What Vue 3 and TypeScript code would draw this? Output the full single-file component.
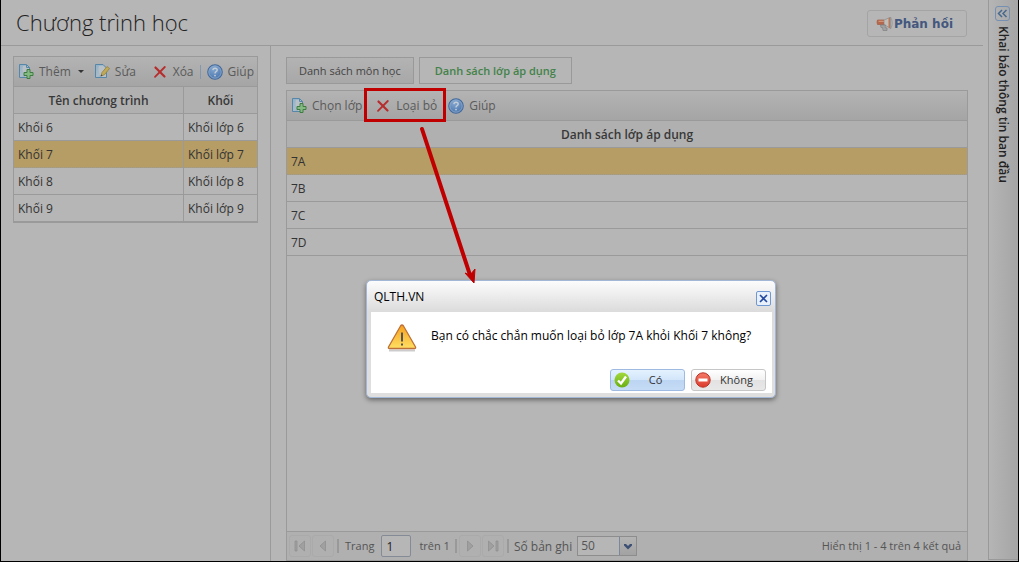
<script setup lang="ts">
import { ref } from 'vue'

interface Program {
  name: string
  grade: string
}

const programs: Program[] = [
  { name: 'Khối 6', grade: 'Khối lớp 6' },
  { name: 'Khối 7', grade: 'Khối lớp 7' },
  { name: 'Khối 8', grade: 'Khối lớp 8' },
  { name: 'Khối 9', grade: 'Khối lớp 9' },
]
const classes: string[] = ['7A', '7B', '7C', '7D']

const selectedProgram = ref(1)
const selectedClass = ref(0)
const page = ref('1')
const pageSize = ref('50')
const confirmOpen = ref(true)
</script>

<template>
  <svg class="defs" width="0" height="0" aria-hidden="true">
    <defs>
      <linearGradient id="g-doc" x1="0" y1="0" x2="1" y2="1">
        <stop offset="0" stop-color="#8fb0c8" />
        <stop offset="0.55" stop-color="#a9bcc9" />
        <stop offset="1" stop-color="#7c9fbd" />
      </linearGradient>
      <radialGradient id="g-help" cx="0.4" cy="0.25" r="0.8">
        <stop offset="0" stop-color="#86a9d0" />
        <stop offset="1" stop-color="#4672ac" />
      </radialGradient>
      <linearGradient id="g-warn" x1="0" y1="0" x2="0" y2="1">
        <stop offset="0" stop-color="#f6a01c" />
        <stop offset="1" stop-color="#ffe063" />
      </linearGradient>
      <linearGradient id="g-yes" x1="0" y1="0" x2="0" y2="1">
        <stop offset="0" stop-color="#a3d93c" />
        <stop offset="1" stop-color="#68ae12" />
      </linearGradient>
      <linearGradient id="g-no" x1="0" y1="0" x2="0" y2="1">
        <stop offset="0" stop-color="#f47a68" />
        <stop offset="1" stop-color="#dc3a2c" />
      </linearGradient>
      <symbol id="i-add" viewBox="0 0 16 16">
        <path d="M1.500 .5H8.500L11.500 3.500V13.500H1.500Z" fill="url(#g-doc)" stroke="#5686a8" />
        <path d="M5 2H8.500L11 4.500V13H7Q3.500 7 5 2Z" fill="#b9c1c6" />
        <path d="M8.500 1V3.500H11.500" fill="none" stroke="#5686a8" />
        <path d="M9 5.500H12V8.500H15V11.500H12V14.500H9V11.500H6V8.500H9Z" fill="#85b983" stroke="#3f7c42" />
      </symbol>
      <symbol id="i-edit" viewBox="0 0 16 16">
        <path d="M1.500 .5H9L12.500 4V13.500H1.500Z" fill="url(#g-doc)" stroke="#5686a8" />
        <path d="M5 2H9L12 4.500V13H7Q3.500 7 5 2Z" fill="#b9c1c6" />
        <path d="M7 12L8 8.500L13 2.500L15.500 4.500L10.500 10.700Z" fill="#c0aa57" stroke="#93803f" stroke-width=".8" />
        <path d="M6.500 12.500L7.300 10.500L8.600 11.600Z" fill="#444" />
      </symbol>
      <symbol id="i-cross" viewBox="0 0 16 16">
        <path d="M3.500 3.500L12.500 12.500" stroke="#b72d2e" stroke-width="2.200" stroke-linecap="round" />
        <path d="M12.800 3L3 12.800" stroke="#b72d2e" stroke-width="1.800" stroke-linecap="round" />
      </symbol>
      <symbol id="i-help" viewBox="0 0 16 16">
        <circle cx="8" cy="8" r="7.200" fill="url(#g-help)" stroke="#42699d" stroke-width="1.200" />
        <circle cx="8" cy="8" r="6.200" fill="none" stroke="#9ab2cd" stroke-width=".7" />
        <path d="M5.800 6.100Q6 4.200 8 4.200Q10.200 4.200 10.200 6.100Q10.200 7.100 9.100 7.700Q8 8.300 8 9.500" fill="none" stroke="#c5cdd6" stroke-width="1.400" />
        <circle cx="8" cy="11.600" r=".9" fill="#c5cdd6" />
      </symbol>
    </defs>
  </svg>

  <div class="page">
    <div class="main">
      <header class="header">
        <h1>Chương trình học</h1>
        <button type="button" class="feedback">
          <svg width="18" height="16" viewBox="0 0 18 16" aria-hidden="true">
            <path d="M1.500 4H8V8.500H1.500Q.5 6 1.500 4Z" fill="#b8684a" stroke="#a35c40" stroke-width=".7" />
            <path d="M2.500 4.700H8V6H2.500Z" fill="#cf9478" />
            <path d="M8 4L14 1.500V12L8 8.500Z" fill="#c2bdb7" stroke="#8b8b8b" stroke-width=".7" />
            <path d="M12.500 2.200L14.500 1V13L12.500 11.200Z" fill="#b8785c" />
            <path d="M14.500 1Q18 7 14.500 13Z" fill="#b4b4b4" stroke="#909090" stroke-width=".7" />
            <path d="M4.500 9H9.500L9 11.500L11 12V14.500H7L6.500 11.500H5Z" fill="#a2a2a2" stroke="#808080" stroke-width=".7" />
          </svg>
          Phản hồi
        </button>
      </header>

      <div class="columns">
        <section class="left">
          <div class="panel">
            <div class="toolbar">
              <button type="button" class="tool">
                <svg width="16" height="16"><use href="#i-add" /></svg>Thêm<i class="caret"></i>
              </button>
              <button type="button" class="tool"><svg width="16" height="16"><use href="#i-edit" /></svg>Sửa</button>
              <button type="button" class="tool push"><svg width="16" height="16"><use href="#i-cross" /></svg>Xóa</button>
              <span class="split"></span>
              <button type="button" class="tool"><svg width="16" height="16"><use href="#i-help" /></svg>Giúp</button>
            </div>
            <table class="grid">
              <thead>
                <tr><th>Tên chương trình</th><th class="grade">Khối</th></tr>
              </thead>
              <tbody>
                <tr v-for="(p, i) in programs" :key="p.name" :class="{ selected: i === selectedProgram }" @click="selectedProgram = i">
                  <td>{{ p.name }}</td>
                  <td>{{ p.grade }}</td>
                </tr>
              </tbody>
            </table>
          </div>
        </section>

        <section class="right">
          <nav class="tabs">
            <button type="button" class="tab first">Danh sách môn học</button>
            <button type="button" class="tab active">Danh sách lớp áp dụng</button>
          </nav>
          <div class="panel fill">
            <div class="toolbar">
              <button type="button" class="tool"><svg width="16" height="16"><use href="#i-add" /></svg>Chọn lớp</button>
              <button type="button" class="tool marked" @click="confirmOpen = true">
                <svg width="16" height="16"><use href="#i-cross" /></svg>Loại bỏ
              </button>
              <button type="button" class="tool"><svg width="16" height="16"><use href="#i-help" /></svg>Giúp</button>
            </div>
            <table class="grid">
              <thead>
                <tr><th>Danh sách lớp áp dụng</th></tr>
              </thead>
              <tbody>
                <tr v-for="(c, i) in classes" :key="c" :class="{ selected: i === selectedClass }" @click="selectedClass = i">
                  <td>{{ c }}</td>
                </tr>
              </tbody>
            </table>
            <footer class="pager">
              <button type="button" class="nav" aria-label="Trang đầu">
                <svg width="12" height="12"><path d="M1 1H3V11H1ZM10.500 1V11L5 6Z" fill="#a0a0a0" stroke="#8d8d8d" stroke-width=".7" /></svg>
              </button>
              <button type="button" class="nav" aria-label="Trang trước">
                <svg width="12" height="12"><path d="M8.500 1V11L3 6Z" fill="#a0a0a0" stroke="#8d8d8d" stroke-width=".7" /></svg>
              </button>
              <span class="bar"></span>
              <label for="page" class="page-label">Trang</label>
              <input id="page" v-model="page" type="text" class="page-input" />
              <span class="total">trên 1</span>
              <span class="bar"></span>
              <button type="button" class="nav" aria-label="Trang sau">
                <svg width="12" height="12"><path d="M3.500 1V11L9 6Z" fill="#a0a0a0" stroke="#8d8d8d" stroke-width=".7" /></svg>
              </button>
              <button type="button" class="nav" aria-label="Trang cuối">
                <svg width="12" height="12"><path d="M1.500 1V11L7 6ZM9 1H11V11H9Z" fill="#a0a0a0" stroke="#8d8d8d" stroke-width=".7" /></svg>
              </button>
              <span class="bar"></span>
              <label for="size" class="size-label">Số bản ghi</label>
              <span class="select-wrap">
                <select id="size" v-model="pageSize">
                  <option>20</option>
                  <option>50</option>
                  <option>100</option>
                </select>
                <span class="trigger">
                  <svg width="10" height="7"><path d="M1 1H3L5 3L7 1H9V2.500L5 6.500L1 2.500Z" fill="#3c4f75" /></svg>
                </span>
              </span>
              <span class="summary">Hiển thị 1 - 4 trên 4 kết quả</span>
            </footer>
          </div>
        </section>
      </div>
    </div>

    <aside class="side">
      <button type="button" class="expand" aria-label="Mở rộng">
        <svg width="13" height="13">
          <path d="M6 3L2.500 6.500L6 10M10.500 3L7 6.500L10.500 10" fill="none" stroke="#46688f" stroke-width="1.500" />
        </svg>
      </button>
      <span class="side-title">Khai báo thông tin ban đầu</span>
    </aside>

    <div v-if="confirmOpen" class="dialog" role="dialog" aria-labelledby="dlg-title">
      <div class="dialog-head">
        <span id="dlg-title">QLTH.VN</span>
        <button type="button" class="close" aria-label="Đóng" @click="confirmOpen = false">
          <svg width="13" height="13"><path d="M3 3L10 10M10 3L3 10" stroke="#2348a0" stroke-width="1.600" /></svg>
        </button>
      </div>
      <div class="dialog-body">
        <div class="message">
          <svg width="32" height="32" viewBox="0 0 32 32" aria-hidden="true">
            <path d="M3 28.500H29" stroke="#000" stroke-opacity=".2" stroke-width="2" />
            <path d="M14.500 4Q16 2 17.500 4L29.500 25Q30 26.500 28.500 26.500H3.500Q2 26.500 2.500 25Z" fill="url(#g-warn)" stroke="#bd7138" stroke-width="1.300" />
            <path d="M15 10.500H17V19.500H15ZM15 21.500H17V23.500H15Z" fill="#53535c" />
          </svg>
          <p>Bạn có chắc chắn muốn loại bỏ lớp 7A khỏi Khối 7 không?</p>
        </div>
        <div class="actions">
          <button type="button" class="btn primary" @click="confirmOpen = false">
            <svg width="16" height="16">
              <circle cx="8" cy="8" r="7.500" fill="url(#g-yes)" />
              <path d="M4 8.500L7 11.500L12 4.500" fill="none" stroke="#fff" stroke-width="2.400" />
            </svg>
            <span>Có</span>
          </button>
          <button type="button" class="btn" @click="confirmOpen = false">
            <svg width="16" height="16">
              <circle cx="8" cy="8" r="7.200" fill="url(#g-no)" stroke="#b93327" />
              <path d="M3.500 6.500H12.500V9.500H3.500Z" fill="#fff" />
            </svg>
            <span>Không</span>
          </button>
        </div>
      </div>
    </div>

    <svg class="arrow" width="64" height="166" aria-hidden="true">
      <path d="M6 7L54 153" stroke="#c00000" stroke-width="4" stroke-linecap="round" />
      <path d="M58 161L49 151L54 153L59 147Z" fill="#c00000" stroke="#c00000" stroke-width="1" />
    </svg>
  </div>
</template>

<style>
body {
  margin: 0;
  background: #b6b6b6;
}
</style>

<style scoped>
.defs {
  position: absolute;
}
.page,
.page * {
  box-sizing: border-box;
}
.page {
  position: relative;
  display: flex;
  min-height: 100vh;
  border: 1px solid #000;
  border-top: 0;
  background: #b6b6b6;
  color: #333;
  font: 12px/16px 'Open Sans', 'Noto Sans', sans-serif;
}
button,
input,
select {
  margin: 0;
  font: inherit;
  color: inherit;
}
button {
  padding: 0;
  border: 0;
  background: none;
  white-space: nowrap;
}
svg {
  display: block;
  flex: none;
}
.main {
  flex: 1;
  min-width: 0;
  display: flex;
  flex-direction: column;
}
.header {
  display: flex;
  align-items: center;
  justify-content: space-between;
  height: 46px;
  margin-right: 5px;
  padding: 0 16px 0 15px;
  border-bottom: 1px solid #9a9a9a;
}
h1 {
  margin: 0 0 2px;
  font-size: 22px;
  line-height: 32px;
  font-weight: 300;
  color: #222;
}
.feedback {
  display: flex;
  align-items: center;
  height: 27px;
  margin-top: 2px;
  padding: 0 13px 0 8px;
  border: 1px solid #a4a4a4;
  border-radius: 3px;
  font-family: 'DejaVu Sans', sans-serif;
  font-weight: 700;
  color: #44577e;
}
.columns {
  flex: 1;
  display: flex;
}
.left {
  width: 270px;
  padding: 10px 12px;
  border-right: 1px solid #9a9a9a;
}
.right {
  flex: 1;
  min-width: 0;
  display: flex;
  flex-direction: column;
  padding: 11px 20px 0 15px;
}
.panel {
  border: 1px solid #9a9a9a;
}
.fill {
  flex: 1;
  display: flex;
  flex-direction: column;
}
.toolbar {
  display: flex;
  align-items: center;
  height: 30px;
  padding: 0 3px 0 4px;
  border-bottom: 1px solid #9a9a9a;
  background: linear-gradient(#b3b3b3, #a5a5a5);
  color: #5a5a5a;
}
.left .toolbar {
  gap: 6px;
}
.tool {
  display: flex;
  align-items: center;
  gap: 5px;
}
.push {
  margin-left: auto;
}
.caret {
  margin: 0 4px 0 2px;
  border: 3px solid transparent;
  border-top-color: #333;
  border-bottom: 0;
}
.split {
  width: 1px;
  height: 14px;
  background: #8497b0;
}
.grid {
  width: 100%;
  border-collapse: separate;
  border-spacing: 0;
}
.grid th,
.grid td {
  height: 27px;
  padding: 2px 4px 0;
  border-bottom: 1px solid #9a9a9a;
  text-align: left;
}
.grid th {
  background: #b0b0b0;
  text-align: center;
  font-weight: 600;
  color: #383838;
}
.grid th + th,
.grid td + td {
  border-left: 1px solid #9a9a9a;
}
.grade {
  width: 74px;
}
.selected td {
  background: #b69c65;
  border-bottom-style: dotted;
}
.tabs {
  display: flex;
  gap: 5px;
  margin-bottom: 6px;
}
.tab {
  height: 27px;
  padding: 0 15px;
  border: 1px solid #999;
  font-size: 11px;
  color: #444;
}
.tab.first {
  padding: 0 12px;
  background: linear-gradient(#b3b3b3, #a8a8a8);
}
.tab.active {
  font-weight: 600;
  color: #43824a;
}
.marked {
  position: relative;
  margin: 0 11px 0 13px;
}
.marked::after {
  content: '';
  position: absolute;
  inset: -10px -9px -8px -11px;
  border: 3px solid #c00000;
}
.pager {
  display: flex;
  align-items: center;
  height: 29px;
  margin-top: auto;
  padding: 0 6px 0 2px;
  border-top: 1px solid #9a9a9a;
  background: #b0b0b0;
  font-size: 11px;
  color: #555;
}
.nav {
  display: grid;
  place-items: center;
  width: 22px;
  height: 22px;
  margin-right: 1px;
  border: 1px solid #aaa;
  border-radius: 3px;
}
.bar {
  width: 2px;
  height: 14px;
  margin: 0 2px;
  background: #999;
}
.page-label {
  margin: 0 7px 0 4px;
}
.page-input {
  width: 30px;
  height: 22px;
  padding: 0 4px;
  border: 1px solid #858b96;
  border-radius: 2px;
  background: #b6b6b6;
  color: #222;
  font-size: 12px;
}
.total {
  margin: 0 3px 0 8px;
}
.size-label {
  margin: 2px 5px 0 3px;
  font-size: 12px;
}
.select-wrap {
  display: flex;
  width: 60px;
  height: 20px;
  border: 1px solid #8d8d8d;
}
select {
  flex: 1;
  min-width: 0;
  padding: 0 3px;
  border: 0;
  appearance: none;
  background: #b6b6b6;
  font-size: 12px;
}
.trigger {
  display: grid;
  place-items: center;
  width: 17px;
  border-left: 1px solid #7b879b;
  background: linear-gradient(#b4b4b4, #a2a2a2);
}
.summary {
  margin-left: auto;
}
.side {
  display: flex;
  flex-direction: column;
  align-items: center;
  gap: 5px;
  width: 30px;
  margin-bottom: 1px;
  padding: 6px 2px 0 0;
  border: solid #999;
  border-width: 0 0 1px 1px;
  background: linear-gradient(90deg, #b5b5b5, #a5a5a5);
}
.expand {
  border: 1px solid #7590b3;
  border-radius: 3px;
}
.side-title {
  writing-mode: vertical-rl;
  font-weight: 600;
  font-size: 12px;
  color: #222;
}
.arrow {
  position: absolute;
  left: 415px;
  top: 122px;
  pointer-events: none;
}
.dialog {
  position: absolute;
  left: 365px;
  top: 280px;
  width: 410px;
  padding: 0 3px 4px 4px;
  border: 1px solid #a2b6d6;
  border-radius: 5px;
  background: linear-gradient(#fcfcfc, #dcdcdc 30px, #dfdfdf);
  box-shadow: 0 2px 5px rgba(0, 0, 0, 0.45);
  color: #000;
}
.dialog-head {
  display: flex;
  align-items: center;
  justify-content: space-between;
  height: 31px;
  padding: 0 1px 0 3px;
}
.close {
  margin-top: 4px;
  border: 1px solid #6f98d2;
  border-radius: 2px;
  background: #e8f0fb;
}
.dialog-body {
  padding: 10px 6px 2px 15px;
  background: #fff;
}
.message {
  display: flex;
  gap: 13px;
}
.message p {
  margin: 6px 0;
  white-space: nowrap;
}
.actions {
  display: flex;
  justify-content: flex-end;
  gap: 6px;
  margin-top: 15px;
}
.btn {
  display: flex;
  align-items: center;
  width: 75px;
  height: 22px;
  padding: 0 3px;
  border: 1px solid #c6c6c6;
  border-radius: 3px;
  background: linear-gradient(#fff, #f1f1f1 50%, #e2e2e2 50%, #e8e8e8);
  font-size: 11px;
  color: #333;
}
.btn span {
  flex: 1;
  text-align: center;
}
.primary {
  border-color: #9ebae1;
  background: linear-gradient(#e4f2fe, #d2e5fa 50%, #bcd5f2 50%, #c6dcf6);
}
</style>
